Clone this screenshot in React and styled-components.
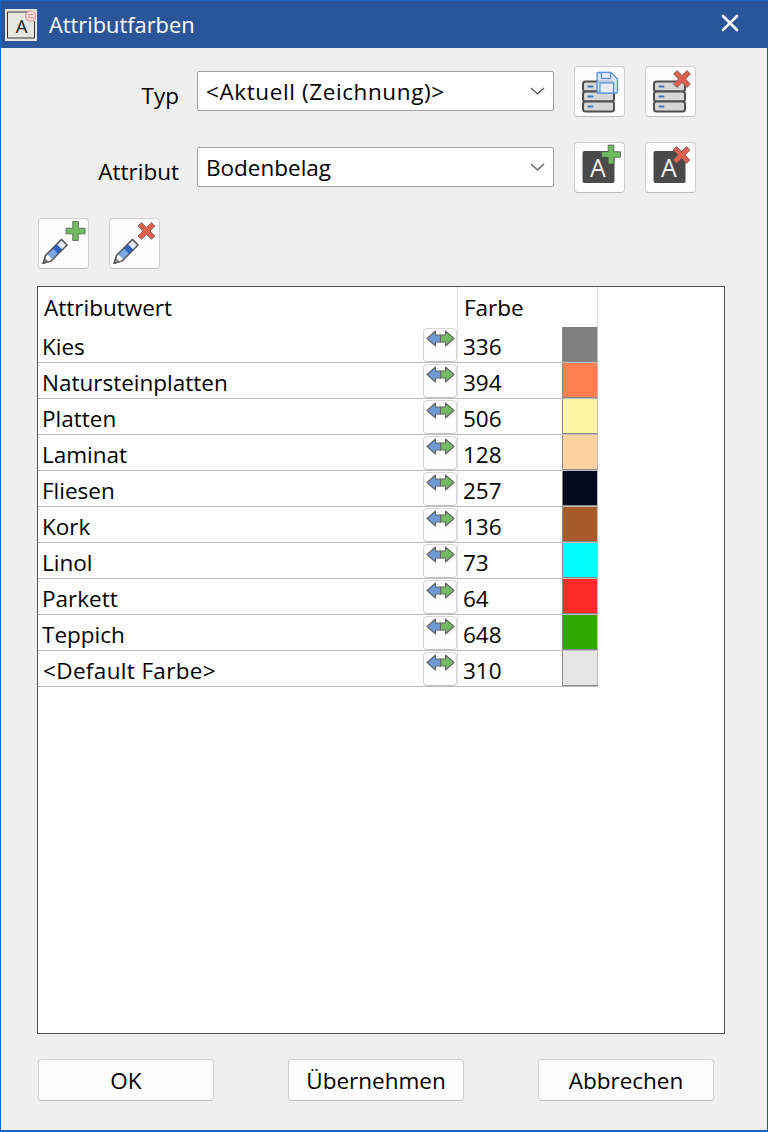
import React from 'react';
import styled, { createGlobalStyle } from 'styled-components';

const GlobalStyle = createGlobalStyle`
  html, body { margin: 0; padding: 0; }
  body { font-family: "Open Sans", "Noto Sans", sans-serif; background: #efefef; }
  * { box-sizing: border-box; }
`;

const Win = styled.div`
  width: 768px;
  height: 1132px;
  display: flex;
  flex-direction: column;
  background: #efefef;
  border: 1px solid #1565c8;
  border-right-color: #2a5699;
  border-bottom-width: 2px;
  overflow: hidden;
`;

const TitleBar = styled.div`
  height: 47px;
  flex: none;
  background: #2a5699;
  display: flex;
  align-items: center;
  padding: 0 28px 0 4px;
  color: #fff;
`;

const TitleText = styled.div`
  font-size: 21.8px;
  margin-left: 12px;
  flex: 1;
`;

const CloseWrap = styled.div`
  display: flex;
  margin-bottom: 4px;
`;

const Body = styled.div`
  flex: 1;
  display: flex;
  flex-direction: column;
  padding: 17px 42px 0 36px;
`;

const FormRow = styled.div`
  height: 52px;
  display: flex;
  align-items: center;
  margin-bottom: 24px;
`;

const FieldLabel = styled.div`
  width: 142px;
  text-align: right;
  font-size: 22.5px;
  color: #000;
  margin-top: 8px;
`;

const Combo = styled.div`
  width: 357px;
  height: 40px;
  margin-left: 18px;
  margin-right: 20px;
  background: #fff;
  border: 1px solid #a0a0a0;
  border-radius: 2px;
  display: flex;
  align-items: center;
  justify-content: space-between;
  padding: 0 8px 0 8px;
  font-size: 22.5px;
  color: #000;
  letter-spacing: ${p => p.$spacing || 0}px;
`;

const IconBtn = styled.div`
  width: 51px;
  height: 51px;
  flex: none;
  background: #fdfdfd;
  border: 1px solid #d0d0d0;
  border-bottom-color: #bcbcbc;
  border-radius: 4px;
  display: flex;
  align-items: center;
  justify-content: center;
  margin-right: ${p => p.$gap || 0}px;
  svg { flex: none; }
`;

const PenRow = styled.div`
  display: flex;
  height: 51px;
  margin-left: 1px;
  margin-top: 1px;
  margin-bottom: 17px;
`;

const TablePanel = styled.div`
  width: 688px;
  height: 748px;
  background: #fff;
  border: 1px solid #555;
`;

const HeaderRow = styled.div`
  display: flex;
  height: 40px;
  width: 560px;
`;

const HeaderCell = styled.div`
  width: ${p => p.$w}px;
  padding-left: ${p => p.$pad}px;
  padding-top: 5px;
  font-size: 22.5px;
  line-height: 32px;
  color: #000;
  border-right: 1px solid #e0e0e0;
`;

const Row = styled.div`
  display: flex;
  width: 560px;
  height: 36px;
  border-bottom: 1px solid #bdbdbd;
`;

const NameCell = styled.div`
  width: 385px;
  padding: 1px 0 0 ${p => p.$pad}px;
  font-size: 22.5px;
  line-height: 38px;
  color: #000;
  white-space: nowrap;
  letter-spacing: ${p => p.$spacing || 0}px;
`;

const SwapBtn = styled.div`
  width: 34px;
  height: 34px;
  margin-top: 1px;
  flex: none;
  background: #fdfdfd;
  border: 1px solid #d8d8d8;
  border-bottom-color: #c4c4c4;
  border-radius: 4px;
  display: flex;
  justify-content: center;
  align-items: flex-start;
  padding-top: 1px;
`;

const ValueCell = styled.div`
  width: 105px;
  padding: 1px 0 0 5px;
  font-size: 22.5px;
  line-height: 38px;
  color: #000;
  border-left: 1px solid #e0e0e0;
`;

const Swatch = styled.div`
  width: 36px;
  height: 35px;
  border: 1px solid #8a8a8a;
  border-top: none;
  border-right-color: #bdbdbd;
`;

const Footer = styled.div`
  display: flex;
  justify-content: space-between;
  width: 676px;
  margin-left: 1px;
  margin-top: 25px;
`;

const FootBtn = styled.div`
  width: 176px;
  height: 42px;
  padding-top: 1px;
  background: #fdfdfd;
  border: 1px solid #d0d0d0;
  border-bottom-color: #bcbcbc;
  border-radius: 4px;
  display: flex;
  align-items: center;
  justify-content: center;
  font-size: 22.5px;
  color: #000;
`;

const Chevron = () => (
  <svg width="15" height="8" viewBox="0 0 15 8" fill="none" stroke="#555" strokeWidth="1.2">
    <path d="M1 1l6.500 6 6.500-6" />
  </svg>
);

const AppIcon = () => (
  <svg width="32" height="32" viewBox="0 0 32 32">
    <rect width="32" height="32" fill="#e6e6e2" />
    <path d="M2.5 3h22M2.500 3v26M2.500 29h27V12" stroke="#333" strokeWidth="1" fill="none" />
    <text x="16.700" y="24" fontSize="18.500" textAnchor="middle" fill="#222" fontFamily="Open Sans">A</text>
    <circle cx="25.700" cy="7" r="5.200" fill="#f6dcdc" stroke="#e08c8c" />
    <path d="M23 5.500h5.500M23 8l5.500 1" stroke="#e08c8c" strokeWidth="1" />
  </svg>
);

const CloseIcon = () => (
  <svg width="18" height="18" viewBox="0 0 18 18" stroke="#fff" strokeWidth="2.600" strokeLinecap="round">
    <path d="M2 2l14 14M16 2L2 16" />
  </svg>
);

const Plus = ({ x, y }) => (
  <path
    transform={`translate(${x} ${y})`}
    d="M-2.800-9.500h5.600v6.700h6.700v5.600H2.800v6.700h-5.600V2.800h-6.700v-5.600h6.700z"
    fill="#6fbb5f"
    stroke="#4c4c4c"
    strokeWidth="0.700"
    strokeLinejoin="round"
  />
);

const Cross = ({ x, y }) => (
  <path
    transform={`translate(${x} ${y}) rotate(45)`}
    d="M-2.500-9.500h5v7h7v5h-7v7h-5v-7h-7v-5h7z"
    fill="#e0604e"
    stroke="#4c4c4c"
    strokeWidth="0.600"
    strokeLinejoin="round"
  />
);

const Disk = ({ y }) => (
  <g>
    <rect x="9" y={y} width="31" height="10" rx="2.500" fill="#d6d6d6" stroke="#4f4f4f" strokeWidth="2" />
    <rect x="13.500" y={y + 4} width="6" height="2" rx="1" fill="#3d74c4" />
  </g>
);

const Stack = () => (
  <>
    <Disk y={15.500} />
    <Disk y={25.500} />
    <Disk y={35.500} />
  </>
);

const SaveStackIcon = () => (
  <svg width="51" height="51" viewBox="0 0 51 51">
    <Stack />
    <path
      d="M24 6.500h13l6.500 6.500v13a1 1 0 0 1-1 1H24a1 1 0 0 1-1-1V7.500a1 1 0 0 1 1-1z"
      fill="#cfe0f6"
      fillOpacity="0.800"
      stroke="#5a8fdc"
      strokeWidth="1.300"
    />
    <rect x="27.500" y="6.500" width="9" height="6" fill="#e4edf9" stroke="#5a8fdc" strokeWidth="1.200" />
    <rect x="26" y="17" width="13.500" height="10" fill="#e4edf9" stroke="#5a8fdc" strokeWidth="1.200" />
  </svg>
);

const DelStackIcon = () => (
  <svg width="51" height="51" viewBox="0 0 51 51">
    <Stack />
    <Cross x={37} y={13} />
  </svg>
);

const AttrIcon = ({ children }) => (
  <svg width="51" height="51" viewBox="0 0 51 51">
    <rect x="8.500" y="9" width="32" height="32" rx="2" fill="#4a4a4a" />
    <text x="24" y="35" fontSize="25" textAnchor="middle" fill="#f0f0f0" fontFamily="Open Sans">A</text>
    {children}
  </svg>
);

const Pen = () => (
  <g>
    <path d="M5 45.500l2.500-8 16-16 5.500 5.500-16 16z" fill="#fff" stroke="#555" strokeWidth="1.200" strokeLinejoin="round" />
    <path d="M9 36l5.500 5.500L20 36l-5.500-5.500z" fill="#7aa6e4" />
    <path d="M14.500 30.500L20 36l4.500-4.500L19 26z" fill="#2a64c4" />
    <path d="M19 26l5.500 5.500 4-4L23 22z" fill="#dfe9f7" />
    <path d="M5 45.500l1.800-5.800 4 4z" fill="#888" />
    <path d="M5 45.500l2.500-8 16-16 5.500 5.500-16 16z" fill="none" stroke="#555" strokeWidth="1.200" strokeLinejoin="round" />
  </g>
);

const PenAddIcon = () => (
  <svg width="51" height="51" viewBox="0 0 51 51">
    <Pen />
    <Plus x={37.500} y={13} />
  </svg>
);

const PenDelIcon = () => (
  <svg width="51" height="51" viewBox="0 0 51 51">
    <Pen />
    <Cross x={37.500} y={13} />
  </svg>
);

const SwapIcon = () => (
  <svg width="29" height="17" viewBox="0 0 29 17">
    <path d="M14.500 5h5V1l8.500 7.500-8.500 7.500v-4h-5z" fill="#72bb62" stroke="#666" strokeWidth="1.100" strokeLinejoin="round" />
    <path d="M14.500 5h-5V1L1 8.500 9.500 16v-4h5z" fill="#6e9ad8" stroke="#666" strokeWidth="1.100" strokeLinejoin="round" />
  </svg>
);

const rows = [
  { name: 'Kies', value: 336, color: '#808080', pad: 4 },
  { name: 'Natursteinplatten', value: 394, color: '#ff7f50', pad: 4 },
  { name: 'Platten', value: 506, color: '#fff4a8', pad: 4 },
  { name: 'Laminat', value: 128, color: '#ffd4a0', pad: 4 },
  { name: 'Fliesen', value: 257, color: '#000a1c', pad: 4 },
  { name: 'Kork', value: 136, color: '#a85a28', pad: 4 },
  { name: 'Linol', value: 73, color: '#00ffff', pad: 4 },
  { name: 'Parkett', value: 64, color: '#ff2a2a', pad: 4 },
  { name: 'Teppich', value: 648, color: '#2ea800', pad: 4 },
  { name: '<Default Farbe>', value: 310, color: '#e6e6e6', pad: 5, spacing: 0.35 },
];

export default function App() {
  return (
    <>
      <GlobalStyle />
      <Win>
        <TitleBar>
          <AppIcon />
          <TitleText>Attributfarben</TitleText>
          <CloseWrap><CloseIcon /></CloseWrap>
        </TitleBar>
        <Body>
          <FormRow>
            <FieldLabel>Typ</FieldLabel>
            <Combo $spacing={0.6}>
              &lt;Aktuell (Zeichnung)&gt;
              <Chevron />
            </Combo>
            <IconBtn $gap={20}><SaveStackIcon /></IconBtn>
            <IconBtn><DelStackIcon /></IconBtn>
          </FormRow>
          <FormRow>
            <FieldLabel>Attribut</FieldLabel>
            <Combo>
              Bodenbelag
              <Chevron />
            </Combo>
            <IconBtn $gap={20}><AttrIcon><Plus x={37} y={12.500} /></AttrIcon></IconBtn>
            <IconBtn><AttrIcon><Cross x={36.500} y={13} /></AttrIcon></IconBtn>
          </FormRow>
          <PenRow>
            <IconBtn $gap={20}><PenAddIcon /></IconBtn>
            <IconBtn><PenDelIcon /></IconBtn>
          </PenRow>
          <TablePanel>
            <HeaderRow>
              <HeaderCell $w={420} $pad={6}>Attributwert</HeaderCell>
              <HeaderCell $w={140} $pad={6}>Farbe</HeaderCell>
            </HeaderRow>
            {rows.map(r => (
              <Row key={r.name}>
                <NameCell $pad={r.pad} $spacing={r.spacing}>{r.name}</NameCell>
                <SwapBtn><SwapIcon /></SwapBtn>
                <ValueCell>{r.value}</ValueCell>
                <Swatch style={{ background: r.color }} />
              </Row>
            ))}
          </TablePanel>
          <Footer>
            <FootBtn>OK</FootBtn>
            <FootBtn>Übernehmen</FootBtn>
            <FootBtn>Abbrechen</FootBtn>
          </Footer>
        </Body>
      </Win>
    </>
  );
}
